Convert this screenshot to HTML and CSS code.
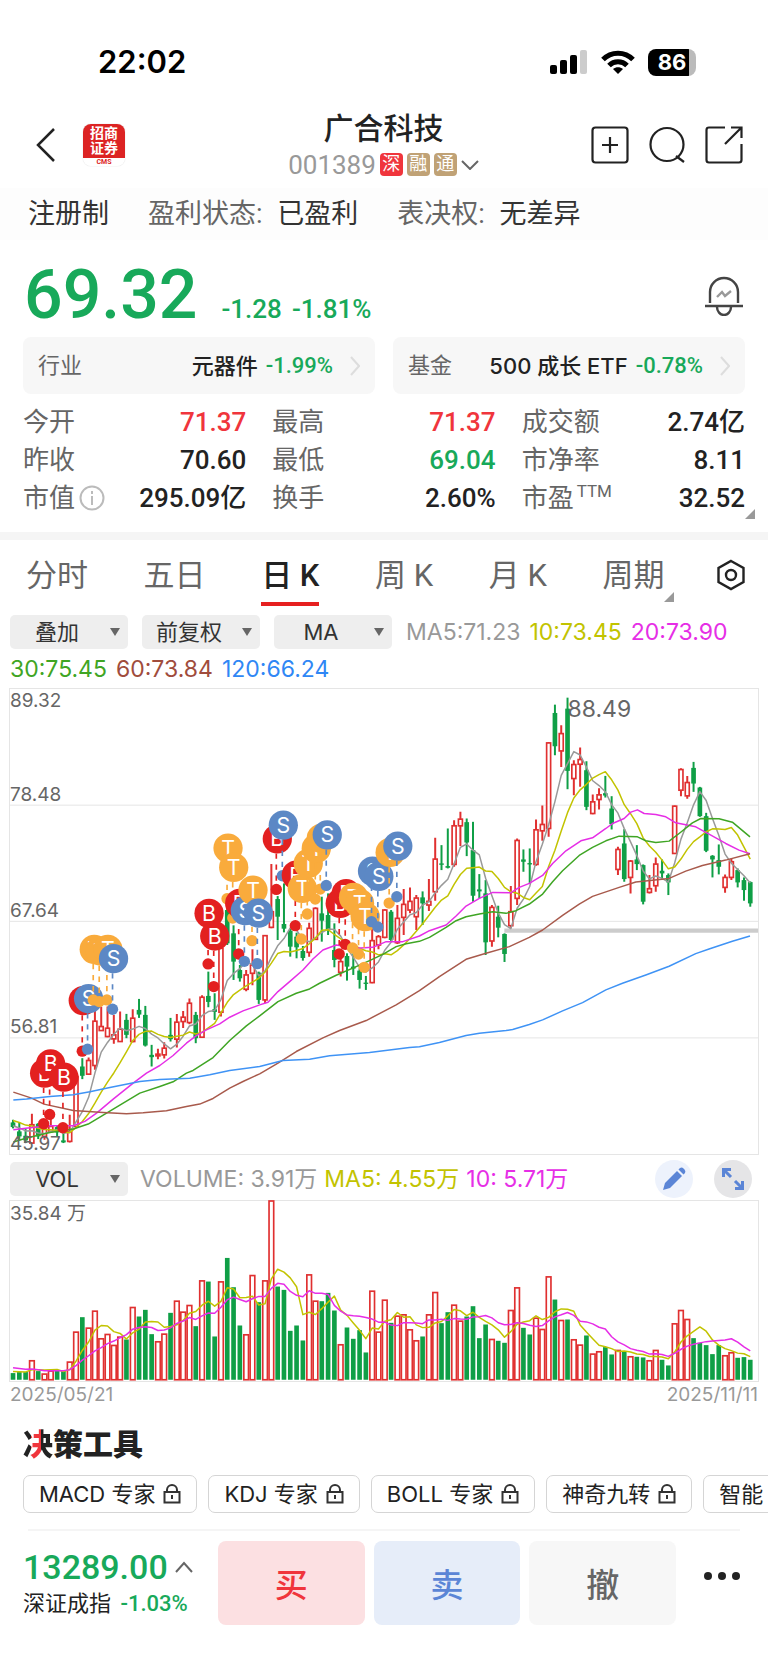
FILE: index.html
```html
<!DOCTYPE html>
<html lang="zh-CN">

<head>
	<meta charset="UTF-8" />
	<meta name="viewport" content="width=device-width, initial-scale=1.0" />
	<title>广合科技 001389</title>
	<link rel="stylesheet" href="styles.css">
</head>

<body>
	<!-- 状态栏 -->
	<div class="status">
		<div class="time">22:02</div>
		<div class="status-icons">
			<svg width="38" height="24" viewBox="0 0 38 24">
				<rect x="0" y="15" width="7" height="9" rx="2" />
				<rect x="10" y="10" width="7" height="14" rx="2" />
				<rect x="20" y="5" width="7" height="19" rx="2" />
				<rect x="30" y="0" width="7" height="24" rx="2" fill="#ccc" />
			</svg>
			<svg width="34" height="24" viewBox="0 0 34 24" fill="none" stroke="#000" stroke-width="5">
				<path d="M2 9.500C10 1 24 1 32 9.500" />
				<path d="M8 15.500C13 10.500 21 10.500 26 15.500" />
				<path d="M12 19C15 16.500 19 16.500 22 19L17 24Z" fill="#000" stroke="none" />
			</svg>
			<div class="battery">86</div>
		</div>
	</div>

	<!-- 头部 -->
	<div class="header">
		<div class="header-left">
			<button class="icon-btn" aria-label="返回">
				<svg width="20" height="34" viewBox="0 0 20 34" fill="none" stroke="#222" stroke-width="2.500">
					<path d="M18 1L2 17L18 33" />
				</svg>
			</button>
			<div class="logo">
				<div class="logo-name">招商<br>证券</div>
				<div class="logo-sub">CMS</div>
			</div>
		</div>
		<div class="header-mid">
			<div class="name">广合科技</div>
			<div class="code">
				<span>001389</span>
				<i class="badge badge-red">深</i>
				<i class="badge">融</i>
				<i class="badge">通</i>
				<svg width="18" height="10" viewBox="0 0 18 10" fill="none" stroke="#666" stroke-width="2">
					<path d="M1 1L9 9L17 1" />
				</svg>
			</div>
		</div>
		<div class="header-right">
			<button class="icon-btn" aria-label="添加">
				<svg width="38" height="38" viewBox="0 0 38 38" fill="none" stroke="#222" stroke-width="2.200">
					<rect x="1.500" y="1.500" width="35" height="35" rx="3" />
					<path d="M11 19H27M19 11V27" />
				</svg>
			</button>
			<button class="icon-btn" aria-label="搜索">
				<svg width="38" height="38" viewBox="0 0 38 38" fill="none" stroke="#222" stroke-width="2.200">
					<circle cx="19" cy="18.500" r="16.500" />
					<path d="M28 30L36 36" />
				</svg>
			</button>
			<button class="icon-btn" aria-label="分享">
				<svg width="38" height="38" viewBox="0 0 38 38" fill="none" stroke="#222" stroke-width="2.200">
					<path d="M20 1.500H4Q1.500 1.500 1.500 4V34Q1.500 36.500 4 36.500H34Q36.500 36.500 36.500 34V18" />
					<path d="M26 1.500H36.500V12M36 2L20 18" />
				</svg>
			</button>
		</div>
	</div>

	<div class="tips">
		<span class="tip"><b>注册制</b></span>
		<span class="tip">盈利状态: <b>已盈利</b></span>
		<span class="tip">表决权: <b>无差异</b></span>
	</div>

	<!-- 报价 -->
	<div class="quote">
		<div class="price">69.32</div>
		<div class="change"><span>-1.28</span><span>-1.81%</span></div>
		<button class="icon-btn bell" aria-label="预警">
			<svg width="38" height="40" viewBox="0 0 38 40" fill="none" stroke="#444" stroke-width="2.400">
				<path d="M5 27V16A14 14 0 0 1 33 16V27" />
				<path d="M0 30H38" />
				<path d="M12 31A7 8 0 0 0 26 31" />
				<path d="M12 21L17 16L20 20L26 15" stroke="#999" />
			</svg>
		</button>
	</div>

	<div class="cards">
		<a class="card" href="#">
			<span class="card-label">行业</span>
			<span class="card-name">元器件</span>
			<span class="num green">-1.99%</span>
			<svg width="10" height="20" viewBox="0 0 10 20" fill="none" stroke="#ddd" stroke-width="2">
				<path d="M1 1L9 10L1 19" />
			</svg>
		</a>
		<a class="card" href="#">
			<span class="card-label">基金</span>
			<span class="card-name">500 成长 ETF</span>
			<span class="num green">-0.78%</span>
			<svg width="10" height="20" viewBox="0 0 10 20" fill="none" stroke="#ddd" stroke-width="2">
				<path d="M1 1L9 10L1 19" />
			</svg>
		</a>
	</div>

	<div class="stats">
		<div class="stat"><span>今开</span><b class="red">71.37</b></div>
		<div class="stat"><span>最高</span><b class="red">71.37</b></div>
		<div class="stat"><span>成交额</span><b>2.74亿</b></div>
		<div class="stat"><span>昨收</span><b>70.60</b></div>
		<div class="stat"><span>最低</span><b class="green">69.04</b></div>
		<div class="stat"><span>市净率</span><b>8.11</b></div>
		<div class="stat">
			<span>市值</span>
			<svg class="info" width="26" height="26" viewBox="0 0 26 26" fill="none" stroke="#bbb" stroke-width="2">
				<circle cx="13" cy="13" r="11.500" />
				<path d="M13 6V9M13 11V20" />
			</svg>
			<b>295.09亿</b>
		</div>
		<div class="stat"><span>换手</span><b>2.60%</b></div>
		<div class="stat"><span>市盈<sup>TTM</sup></span><b class="more">32.52</b></div>
	</div>

	<!-- 周期切换 -->
	<div class="tabs">
		<button class="tab">分时</button>
		<button class="tab">五日</button>
		<button class="tab active">日 K</button>
		<button class="tab">周 K</button>
		<button class="tab">月 K</button>
		<button class="tab more">周期</button>
		<button class="icon-btn" aria-label="设置">
			<svg width="30" height="32" viewBox="0 0 30 32" fill="none" stroke="#222" stroke-width="2.400">
				<path d="M15 2L27.500 9V23L15 30L2.500 23V9Z" />
				<circle cx="15" cy="16" r="5" />
			</svg>
		</button>
	</div>

	<div class="toolbar">
		<span class="select"><select aria-label="叠加"><option>叠加</option></select></span>
		<span class="select"><select aria-label="复权"><option>前复权</option></select></span>
		<span class="select"><select aria-label="主图指标"><option>MA</option></select></span>
		<span class="c5">MA5:71.23</span>
		<span class="c10">10:73.45</span>
		<span class="c20">20:73.90</span>
		<span class="c30">30:75.45</span>
		<span class="c60">60:73.84</span>
		<span class="c120">120:66.24</span>
	</div>

	<svg class="chart" id="kline" viewBox="0 -4 2247 1398"></svg>

	<div class="toolbar vol-bar">
		<span class="select"><select aria-label="副图指标"><option>VOL</option></select></span>
		<span class="c5">VOLUME: 3.91万</span>
		<span class="c10">MA5: 4.55万</span>
		<span class="c20">10: 5.71万</span>
		<button class="round" aria-label="画线">
			<svg width="24" height="24" viewBox="0 0 24 24" fill="#5b85d6">
				<path d="M1 23L3 16L15 4L20 9L8 21Z" />
				<path d="M16.500 2.500L18 1Q20 0 21.500 1.500L22.500 2.500Q24 4 23 6L21.500 7.500Z" />
			</svg>
		</button>
		<button class="round round-gray" aria-label="全屏">
			<svg width="24" height="24" viewBox="0 0 24 24" fill="none" stroke="#5b85d6" stroke-width="3">
				<path d="M2.500 10V2.500H10M3 3L10 10" />
				<path d="M21.500 14V21.500H14M21 21L14 14" />
			</svg>
		</button>
	</div>

	<svg class="chart" id="volume" viewBox="0 151 2247 540"></svg>

	<div class="dates"><span>2025/05/21</span><span>2025/11/11</span></div>

	<!-- 决策工具 -->
	<h2 class="tools-title"><span>决</span>策工具</h2>
	<div class="chips">
		<button class="chip">MACD 专家<svg class="lock" viewBox="0 0 18 20"><path d="M1.500 8H16.500V18.500H1.500ZM4 8V6A5 5 0 0 1 14 6V8M9 11V15" /></svg></button>
		<button class="chip">KDJ 专家<svg class="lock" viewBox="0 0 18 20"><path d="M1.500 8H16.500V18.500H1.500ZM4 8V6A5 5 0 0 1 14 6V8M9 11V15" /></svg></button>
		<button class="chip">BOLL 专家<svg class="lock" viewBox="0 0 18 20"><path d="M1.500 8H16.500V18.500H1.500ZM4 8V6A5 5 0 0 1 14 6V8M9 11V15" /></svg></button>
		<button class="chip">神奇九转<svg class="lock" viewBox="0 0 18 20"><path d="M1.500 8H16.500V18.500H1.500ZM4 8V6A5 5 0 0 1 14 6V8M9 11V15" /></svg></button>
		<button class="chip">智能</button>
	</div>

	<!-- 底部交易栏 -->
	<div class="footer">
		<div class="index">
			<div class="index-value">13289.00
				<svg width="18" height="12" viewBox="0 0 18 12" fill="none" stroke="#666" stroke-width="2">
					<path d="M1 11L9 2L17 11" />
				</svg>
			</div>
			<div class="index-name">深证成指 <span class="num green">-1.03%</span></div>
		</div>
		<button class="trade buy">买</button>
		<button class="trade sell">卖</button>
		<button class="trade cancel">撤</button>
		<button class="icon-btn dots" aria-label="更多">
			<svg width="38" height="10" viewBox="0 0 38 10" fill="#222">
				<circle cx="5" cy="5" r="4" />
				<circle cx="19" cy="5" r="4" />
				<circle cx="33" cy="5" r="4" />
			</svg>
		</button>
	</div>

	<script src="chart.js"></script>
</body>

</html>
```
FILE: styles.css
```css
* {
	box-sizing: border-box;
}

body {
	margin: 0;
	background: #fff;
	color: #222;
	font-family: Roboto, "Noto Sans CJK SC", sans-serif;
	overflow-x: hidden;
}

button {
	border: 0;
	padding: 0;
	background: none;
	color: inherit;
	font-family: inherit;
	cursor: pointer;
}

svg {
	display: block;
	flex: none;
}

.icon-btn {
	display: block;
}

.green {
	color: #18a95a;
}

.red {
	color: #f0353c;
}

/* 状态栏 */
.status {
	display: flex;
	justify-content: space-between;
	align-items: center;
	height: 106px;
	padding: 18px 72px 0 98px;
}

.time {
	font: 600 31px/36px Inter, sans-serif;
	color: #000;
}

.status-icons {
	display: flex;
	align-items: center;
	gap: 13px;
}

.battery {
	width: 48px;
	height: 27px;
	border-radius: 8px;
	background: linear-gradient(90deg, #000 86%, #bbb 86%);
	color: #fff;
	font: 700 22px/27px Inter, sans-serif;
	text-align: center;
}

/* 头部 */
.header {
	display: grid;
	grid-template-columns: 1fr auto 1fr;
	align-items: center;
	height: 82px;
	padding: 0 25px 0 36px;
}

.header-left {
	display: flex;
	align-items: center;
	gap: 27px;
	padding-bottom: 4px;
}

.logo {
	width: 42px;
	height: 42px;
	border-radius: 8px;
	background: linear-gradient(#dc2323 82%, #fff 82%);
	box-shadow: 0 0 1px #bbb;
	text-align: center;
	overflow: hidden;
}

.logo-name {
	height: 34px;
	padding-top: 2px;
	color: #fff;
	font-size: 14px;
	font-weight: 700;
	line-height: 15px;
}

.logo-sub {
	color: #dc2323;
	font-size: 7px;
	font-weight: 700;
	line-height: 8px;
}

.header-mid {
	padding: 0 12px 3px 0;
	text-align: center;
}

.name {
	font-size: 30px;
	font-weight: 500;
	line-height: 38px;
}

.code {
	display: flex;
	align-items: center;
	gap: 4px;
	color: #999;
	font-size: 26px;
	line-height: 34px;
}

.badge {
	width: 23px;
	height: 23px;
	border-radius: 4px;
	background: #c0a276;
	color: #fff;
	font-size: 18px;
	font-style: normal;
	line-height: 22px;
}

.badge-red {
	background: #f0353c;
}

.header-right {
	display: flex;
	justify-content: flex-end;
	gap: 19px;
	padding-bottom: 4px;
}

.tips {
	display: flex;
	gap: 39px;
	height: 52px;
	padding: 0 28px;
	background: #fdfdfd;
	color: #666;
	font-size: 27px;
	line-height: 52px;
}

.tips b {
	margin-left: 8px;
	font-weight: 400;
	color: #333;
}

.tip:first-child b {
	margin-left: 0;
}

/* 报价 */
.quote {
	display: flex;
	align-items: baseline;
	height: 97px;
	padding: 14px 25px 0 24px;
	color: #18a95a;
	font-weight: 500;
}

.price {
	font-size: 68px;
	line-height: 82px;
}

.change {
	display: flex;
	gap: 10px;
	margin-left: 24px;
	font-size: 26px;
}

.bell {
	margin-left: auto;
	align-self: center;
}

.cards {
	display: grid;
	grid-template-columns: 1fr 1fr;
	gap: 18px;
	padding: 0 23px;
}

.card {
	display: flex;
	align-items: center;
	height: 57px;
	padding: 0 15px;
	border-radius: 8px;
	background: #f7f7f7;
	color: #222;
	font-size: 22px;
	line-height: 30px;
	text-decoration: none;
}

.card-label {
	margin-right: auto;
	color: #666;
}

.card-name {
	font-family: Inter, "Noto Sans CJK SC", sans-serif;
	font-weight: 500;
}

.num {
	font-weight: 500;
}

.card .num {
	margin: 0 17px 0 8px;
}

.stats {
	display: grid;
	grid-template-columns: repeat(3, 1fr);
	column-gap: 26px;
	padding: 9px 23px 15px;
	border-bottom: 8px solid #f5f5f5;
	font-size: 26px;
	line-height: 38px;
}

.stat {
	display: flex;
	align-items: center;
	height: 38px;
	color: #666;
}

.stat b {
	margin-left: auto;
	font-weight: 500;
	color: #222;
}

.stat b.red {
	color: #f0353c;
}

.stat b.green {
	color: #18a95a;
}

.stat sup {
	margin-left: 3px;
	font-size: 17px;
	line-height: 1;
}

.info {
	margin-left: 4px;
}

/* 右下角小三角 */
.more {
	position: relative;
}

.more::after {
	content: "";
	position: absolute;
	right: -10px;
	bottom: -2px;
	border-left: 10px solid transparent;
	border-bottom: 10px solid #999;
}

/* 周期切换 */
.tabs {
	display: flex;
	justify-content: space-between;
	align-items: center;
	height: 70px;
	padding: 0 22px 0 26px;
}

.tab {
	height: 70px;
	color: #666;
	font-size: 31px;
	line-height: 72px;
}

.tab.active {
	color: #222;
	font-weight: 500;
	background: linear-gradient(#e62020, #e62020) 0 62px / 100% 4px no-repeat;
}

.tab.more {
	margin-right: -4px;
}

.tab.more::after {
	bottom: 8px;
}

.toolbar {
	display: flex;
	flex-wrap: wrap;
	align-items: center;
	gap: 3px 9px;
	padding: 5px 10px 2px;
	font: 23px/34px Inter, "Noto Sans CJK SC", sans-serif;
}

.select {
	position: relative;
	width: 118px;
	height: 34px;
	margin-right: 5px;
}

.select select {
	width: 100%;
	height: 34px;
	padding: 0 24px 0 0;
	border: 0;
	border-radius: 5px;
	background: #eee;
	color: #333;
	font: inherit;
	font-size: 22px;
	text-align: center;
	text-align-last: center;
	appearance: none;
}

.select::after {
	content: "";
	position: absolute;
	right: 8px;
	top: 13px;
	border: 5px solid transparent;
	border-top: 8px solid #666;
	border-bottom: 0;
	pointer-events: none;
}

.c5 {
	color: #999;
}

.c10 {
	color: #c2c300;
}

.c20 {
	color: #e62ee6;
}

.c30 {
	color: #3fa524;
}

.c60 {
	color: #a04c3c;
}

.c120 {
	color: #2f87f5;
}

.chart {
	width: calc(100% - 18px);
	margin: 0 9px;
	border: 1px solid #e5e5e5;
	font-family: Inter, "Noto Sans CJK SC", sans-serif;
	overflow: visible;
}

.vol-bar {
	flex-wrap: nowrap;
	column-gap: 7px;
	height: 45px;
	white-space: nowrap;
}

.round {
	display: flex;
	align-items: center;
	justify-content: center;
	width: 38px;
	height: 38px;
	margin-left: auto;
	border-radius: 50%;
	background: #edf2fc;
}

.round-gray {
	margin-left: 14px;
	margin-right: 6px;
	background: #e5e5e7;
}

.dates {
	display: flex;
	justify-content: space-between;
	padding: 0 10px;
	color: #999;
	font: 19px/26px Inter, sans-serif;
}

/* 决策工具 */
.tools-title {
	margin: 17px 23px 10px;
	font-size: 30px;
	font-weight: 900;
	line-height: 40px;
}

.tools-title span {
	background: linear-gradient(90deg, #222 28%, #f0353c 28%, #f0353c 60%, #222 60%);
	background-clip: text;
	-webkit-background-clip: text;
	color: transparent;
}

.chips {
	display: flex;
	gap: 11px;
	padding-left: 23px;
	overflow: hidden;
}

.chip {
	display: flex;
	flex: none;
	align-items: center;
	gap: 8px;
	height: 38px;
	padding: 0 15px;
	border: 1px solid #d5d5d5;
	border-radius: 7px;
	font: 22px/36px Inter, "Noto Sans CJK SC", sans-serif;
}

.lock {
	width: 18px;
	height: 20px;
	fill: none;
	stroke: #333;
	stroke-width: 2;
}

/* 底部交易栏 */
.footer {
	display: flex;
	align-items: center;
	gap: 9px;
	margin-top: 16px;
	padding: 12px 27px 45px 23px;
	background: linear-gradient(#f5f5f5, #f5f5f5) 28px 0 / calc(100% - 56px) 2px no-repeat;
}

.index {
	width: 186px;
	padding-top: 2px;
}

.index-value {
	display: flex;
	align-items: center;
	gap: 7px;
	color: #18a95a;
	font-size: 34px;
	font-weight: 500;
	line-height: 40px;
}

.index-name {
	font-size: 22px;
	line-height: 34px;
	white-space: nowrap;
}

.index-name .num {
	margin-left: 4px;
}

.trade {
	flex: 1;
	height: 84px;
	border-radius: 8px;
	font-size: 33px;
	font-weight: 500;
}

.buy {
	background: #fce0e2;
	color: #f0353c;
}

.sell {
	background: #e6edf9;
	color: #5b85d6;
}

.cancel {
	background: #f7f7f7;
	color: #666;
}

.dots {
	margin: 0 0 14px 18px;
}
```
FILE: chart.js
```js
const RED = "#e03030";
const GREEN = "#0f9f46";
const STEP = 18.93;

// [涨跌, 最高, 实体上沿, 实体下沿, 最低, 成交量]
const bars = [
	["G", 1290, 1298, 1312, 1316, 668], ["G", 1298, 1325, 1340, 1352, 665], ["G", 1318, 1338, 1352, 1360, 665],
	["R", 1272, 1305, 1360, 1360, 631], ["G", 1300, 1302, 1340, 1348, 662], ["R", 1300, 1318, 1340, 1350, 671],
	["R", 1270, 1310, 1325, 1330, 662], ["G", 1308, 1312, 1328, 1340, 660], ["G", 1315, 1352, 1358, 1360, 660],
	["R", 1275, 1325, 1355, 1358, 635], ["R", 1160, 1160, 1310, 1312, 545], ["G", 1105, 1130, 1158, 1168, 500],
	["R", 1103, 1112, 1153, 1155, 533], ["R", 955, 994, 1127, 1140, 482], ["R", 950, 1010, 1022, 1022, 565],
	["R", 950, 1015, 1040, 1042, 552], ["R", 975, 1035, 1047, 1062, 585], ["R", 965, 1018, 1055, 1056, 560],
	["G", 972, 990, 1035, 1045, 567], ["R", 958, 985, 1055, 1057, 471], ["G", 927, 960, 974, 984, 498],
	["G", 948, 975, 1067, 1070, 478], ["G", 1065, 1095, 1102, 1130, 551], ["R", 1077, 1093, 1098, 1108, 574],
	["R", 1057, 1075, 1095, 1106, 551], ["G", 984, 1035, 1048, 1055, 487], ["R", 972, 997, 1048, 1073, 452],
	["R", 963, 982, 995, 1014, 485], ["R", 926, 940, 998, 1003, 465], ["G", 966, 975, 1045, 1060, 527],
	["R", 916, 922, 1042, 1044, 391], ["G", 845, 918, 936, 952, 393], ["G", 910, 958, 966, 990, 558],
	["R", 770, 775, 967, 980, 394], ["G", 650, 660, 760, 765, 322], ["G", 706, 730, 815, 870, 410],
	["G", 825, 840, 865, 875, 525], ["R", 840, 855, 898, 904, 553], ["R", 778, 825, 850, 886, 375],
	["G", 845, 848, 930, 942, 455], ["R", 735, 737, 930, 940, 391], ["R", 522, 665, 712, 715, 151],
	["G", 618, 627, 680, 750, 408], ["G", 580, 702, 716, 727, 418], ["G", 716, 722, 770, 800, 541],
	["G", 728, 740, 772, 805, 525], ["G", 768, 783, 804, 812, 570], ["R", 698, 715, 787, 800, 373],
	["R", 652, 655, 748, 750, 452], ["G", 620, 670, 692, 755, 452], ["G", 610, 675, 720, 735, 427],
	["G", 700, 780, 810, 832, 480], ["R", 795, 815, 847, 860, 583], ["G", 790, 798, 830, 872, 531],
	["G", 790, 830, 836, 855, 565], ["G", 835, 842, 870, 896, 539], ["G", 858, 878, 882, 900, 606],
	["R", 715, 752, 878, 880, 422], ["R", 735, 740, 765, 778, 545], ["R", 658, 660, 742, 745, 449],
	["G", 660, 665, 750, 755, 517], ["R", 645, 685, 758, 762, 497], ["R", 597, 643, 682, 735, 493],
	["R", 592, 634, 660, 670, 538], ["R", 615, 624, 680, 720, 571], ["G", 604, 622, 640, 705, 558],
	["R", 567, 634, 645, 663, 493], ["R", 443, 507, 605, 632, 426], ["G", 465, 520, 524, 540, 518],
	["G", 415, 528, 533, 535, 485], ["R", 390, 407, 523, 530, 464], ["R", 365, 387, 407, 468, 512],
	["G", 385, 396, 457, 498, 498], ["G", 395, 480, 617, 635, 467], ["G", 552, 598, 604, 625, 563],
	["G", 570, 610, 757, 795, 522], ["R", 645, 652, 753, 770, 567], ["G", 647, 680, 713, 742, 571],
	["G", 730, 732, 792, 816, 577], ["R", 588, 665, 707, 715, 480], ["R", 445, 451, 625, 645, 412],
	["G", 478, 508, 515, 545, 532], ["G", 475, 519, 523, 580, 552], ["R", 388, 419, 523, 527, 503],
	["R", 346, 403, 422, 452, 537], ["R", 155, 158, 415, 440, 379], ["G", 43, 68, 168, 195, 447],
	["R", 105, 130, 182, 230, 510], ["G", 22, 55, 242, 297, 507], ["R", 210, 223, 265, 315, 568],
	["R", 172, 208, 222, 290, 584], ["G", 213, 240, 350, 360, 555], ["R", 313, 335, 370, 372, 611],
	["R", 294, 314, 328, 358, 604], ["G", 257, 309, 316, 322, 590], ["G", 318, 355, 402, 418, 612],
	["R", 470, 478, 538, 555, 600], ["G", 417, 460, 567, 575, 602], ["R", 510, 513, 562, 610, 619],
	["G", 465, 508, 522, 540, 619], ["G", 523, 525, 635, 643, 621], ["R", 555, 596, 607, 610, 631],
	["R", 502, 522, 587, 605, 600], ["G", 508, 542, 550, 565, 628], ["G", 550, 555, 577, 615, 645],
	["R", 346, 348, 490, 492, 520], ["R", 234, 238, 300, 318, 480], ["R", 257, 277, 317, 326, 507],
	["G", 215, 233, 280, 305, 563], ["G", 290, 292, 378, 380, 577], ["G", 368, 378, 482, 486, 584],
	["G", 495, 497, 508, 562, 611], ["G", 463, 510, 530, 553, 584], ["R", 553, 562, 592, 608, 616],
	["R", 505, 515, 562, 570, 607], ["G", 535, 540, 577, 592, 622], ["G", 562, 570, 600, 632, 620],
	["G", 574, 576, 640, 650, 628],
];

// 长周期均线
const ma20 = "10,1320 60,1314 120,1308 190,1308 225,1295 260,1270 310,1228 370,1180 410,1150 450,1127 490,1097 530,1060 560,1037 590,1020 630,1002 660,982 700,963 750,945 775,937 805,905 840,875 880,840 910,807 940,780 980,765 1040,775 1090,772 1130,755 1180,755 1230,738 1260,722 1310,705 1340,678 1370,648 1410,625 1450,607 1505,608 1530,592 1560,580 1600,556 1630,520 1670,482 1715,452 1750,443 1790,415 1810,400 1845,385 1865,366 1885,359 1905,370 1940,373 1970,380 2000,398 2060,410 2100,432 2150,460 2190,480 2223,491";
const ma30 = "10,1357 50,1345 120,1328 190,1318 235,1303 280,1276 330,1246 390,1210 450,1190 490,1176 530,1150 550,1142 610,1103 660,1052 710,1008 750,978 805,935 860,910 900,897 930,880 980,856 1040,830 1080,812 1120,793 1160,770 1190,761 1230,754 1260,742 1310,712 1340,692 1370,680 1410,672 1450,665 1490,670 1520,662 1560,642 1600,612 1630,575 1660,542 1710,496 1750,472 1790,452 1830,438 1885,440 1910,452 1940,457 1980,453 2010,430 2050,398 2075,385 2130,386 2170,396 2223,440";
const ma60 = "10,1207 65,1225 102,1243 190,1262 280,1268 350,1272 400,1269 470,1263 530,1250 570,1243 610,1226 660,1195 700,1175 750,1152 805,1120 860,1085 940,1044 990,1022 1070,992 1160,945 1230,902 1290,860 1370,808 1430,790 1500,770 1560,742 1600,720 1660,676 1710,642 1750,619 1830,592 1880,576 1980,565 2030,543 2080,526 2150,510 2223,491";
const ma120 = "10,1231 50,1228 120,1220 190,1215 240,1206 300,1193 390,1175 450,1169 540,1165 600,1155 660,1142 750,1130 820,1112 900,1108 960,1098 1080,1088 1200,1073 1230,1071 1290,1058 1370,1037 1410,1030 1490,1022 1510,1019 1560,1004 1600,990 1660,963 1720,938 1790,900 1840,880 1910,855 1980,829 2060,791 2100,777 2170,754 2223,738";

// 买卖点 B 买 / S 卖 / T 做T
const marks = [
	["B", 104, 1150], ["B", 122, 1122], ["B", 162, 1162], ["B", 220, 932], ["S", 236, 926],
	["T", 253, 778], ["T", 271, 783], ["T", 294, 778], ["S", 311, 806], ["B", 598, 670],
	["B", 615, 738], ["T", 655, 474], ["T", 672, 532], ["B", 690, 640], ["S", 707, 662],
	["T", 730, 600], ["S", 746, 669], ["B", 803, 446], ["S", 821, 405], ["B", 860, 555],
	["T", 878, 595], ["T", 896, 520], ["T", 920, 475], ["T", 935, 445], ["S", 953, 434],
	["B", 992, 640], ["B", 1010, 611], ["T", 1032, 622], ["T", 1050, 640], ["T", 1067, 680],
	["S", 1089, 543], ["S", 1108, 559], ["T", 1142, 487], ["S", 1165, 468],
];
const markColors = { B: "#e32020", S: "#5c88c5", T: "#f9ab3c" };

const xOf = (i) => 9 + i * STEP;

function polyline(points, color) {
	return `<polyline points="${points}" fill="none" stroke="${color}" stroke-width="4.5" stroke-linejoin="round"/>`;
}

// seed 为首根之前的数据
function average(values, seed, n) {
	const all = seed.concat(values);
	return values.map((v, i) => {
		const end = i + seed.length + 1;
		const sum = all.slice(end - n, end).reduce((a, b) => a + b, 0);
		return `${xOf(i)},${sum / n}`;
	}).join(" ");
}

function grid(ys) {
	return ys.map((y) => `<path d="M0 ${y}H2247" stroke="#e5e5e5" stroke-width="3"/>`).join("");
}

function label(x, y, text, size = 57) {
	return `<text x="${x}" y="${y}" font-size="${size}" fill="#666">${text}</text>`;
}

function drawKline() {
	let out = grid([345, 694, 1044]);
	out += `<path d="M1485 722H2247" stroke="#ccc" stroke-width="13"/>`;

	bars.forEach(([type, high, top, bottom, low], i) => {
		const x = xOf(i);
		if (type === "R") {
			out += `<path d="M${x} ${high}V${top}M${x} ${bottom}V${low}" stroke="${RED}" stroke-width="6"/>`;
			out += `<rect x="${x - 6}" y="${top}" width="12" height="${bottom - top}" fill="#fff" stroke="${RED}" stroke-width="5"/>`;
		} else {
			out += `<path d="M${x} ${high}V${low}" stroke="${GREEN}" stroke-width="6"/>`;
			out += `<rect x="${x - 7}" y="${top}" width="14" height="${bottom - top}" fill="${GREEN}"/>`;
		}
	});

	const closes = bars.map((b) => (b[0] === "R" ? b[2] : b[3]));
	const seed = [1276, 1276, 1276, 1276, 1276, 1307, 1307, 1307, 1307];
	out += polyline(average(closes, seed, 5), "#999");
	out += polyline(average(closes, seed, 10), "#c2c300");
	out += polyline(ma20, "#e62ee6");
	out += polyline(ma30, "#3fa524");
	out += polyline(ma60, "#a85a4c");
	out += polyline(ma120, "#3f93f5");

	marks.forEach(([type, x, y]) => {
		const c = markColors[type];
		out += `<path d="M${x - 3} ${y + 44}V${y + 140}" stroke="${c}" stroke-width="5" stroke-dasharray="16 17"/>`;
		out += `<circle cx="${x - 3}" cy="${y + 152}" r="17" fill="${c}"/>`;
		out += `<circle cx="${x}" cy="${y}" r="44" fill="${c}"/>`;
		out += `<text x="${x}" y="${y + 23}" font-size="64" fill="#fff" text-anchor="middle">${type}</text>`;
	});

	out += label(0, 50, "89.32") + label(0, 332, "78.48") + label(0, 680, "67.64");
	out += label(0, 1030, "56.81") + label(0, 1380, "45.97") + label(1675, 80, "88.49", 69);
	document.getElementById("kline").innerHTML = out;
}

function drawVolume() {
	let out = label(0, 207, "35.84 万");
	bars.forEach((b, i) => {
		const x = xOf(i);
		const top = b[5];
		if (b[0] === "R") {
			out += `<rect x="${x - 7}" y="${top}" width="14" height="${688 - top}" fill="#fff" stroke="${RED}" stroke-width="5"/>`;
		} else {
			out += `<rect x="${x - 7}" y="${top}" width="14" height="${688 - top}" fill="${GREEN}"/>`;
		}
	});

	const volumes = bars.map((b) => b[5]);
	const seed = [640, 640, 640, 640, 640, 662, 662, 662, 662];
	out += polyline(average(volumes, seed, 5), "#c2c300");
	out += polyline(average(volumes, seed, 10), "#e62ee6");
	document.getElementById("volume").innerHTML = out;
}

drawKline();
drawVolume();
```
